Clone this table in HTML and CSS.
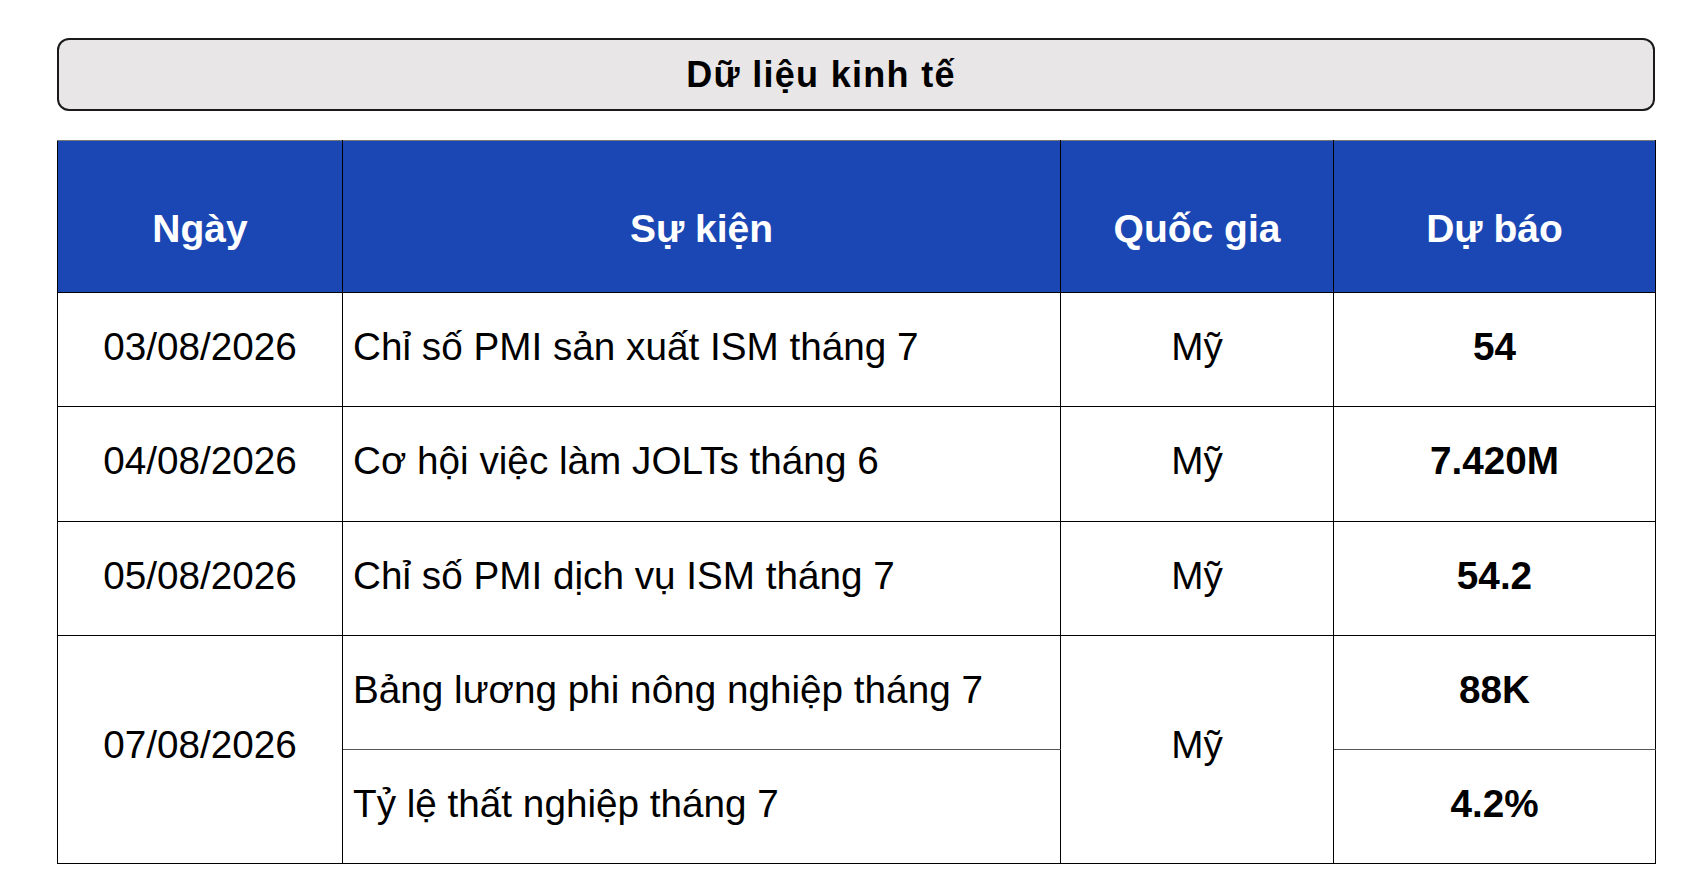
FILE: index.html
```html
<!DOCTYPE html>
<html lang="vi">
<head>
<meta charset="utf-8">
<title>Dữ liệu kinh tế</title>
<link rel="stylesheet" href="styles.css">
</head>
<body>
<div class="page">
  <div class="title-box"><span class="title">Dữ liệu kinh tế</span></div>
  <table class="data">
    <colgroup>
      <col class="c-date">
      <col class="c-event">
      <col class="c-country">
      <col class="c-forecast">
    </colgroup>
    <thead>
      <tr class="head-row">
        <th>Ngày</th>
        <th>Sự kiện</th>
        <th>Quốc gia</th>
        <th>Dự báo</th>
      </tr>
    </thead>
    <tbody>
      <tr class="r1">
        <td class="date">03/08/2026</td>
        <td class="event">Chỉ số PMI sản xuất ISM tháng 7</td>
        <td class="country">Mỹ</td>
        <td class="value">54</td>
      </tr>
      <tr class="r2">
        <td class="date">04/08/2026</td>
        <td class="event">Cơ hội việc làm JOLTs tháng 6</td>
        <td class="country">Mỹ</td>
        <td class="value">7.420M</td>
      </tr>
      <tr class="r3">
        <td class="date">05/08/2026</td>
        <td class="event">Chỉ số PMI dịch vụ ISM tháng 7</td>
        <td class="country">Mỹ</td>
        <td class="value">54.2</td>
      </tr>
      <tr class="r4">
        <td class="date merged" rowspan="2">07/08/2026</td>
        <td class="event sub-top">Bảng lương phi nông nghiệp tháng 7</td>
        <td class="country merged" rowspan="2">Mỹ</td>
        <td class="value sub-top">88K</td>
      </tr>
      <tr class="r5">
        <td class="event">Tỷ lệ thất nghiệp tháng 7</td>
        <td class="value">4.2%</td>
      </tr>
    </tbody>
  </table>
</div>
</body>
</html>
```
FILE: styles.css
```css
html, body {
  margin: 0;
  padding: 0;
  background: #ffffff;
}

body {
  font-family: "Liberation Sans", Arial, Helvetica, sans-serif;
  color: #000000;
}

.page {
  padding: 38px 51px 0 57px;
}

.title-box {
  box-sizing: border-box;
  height: 73px;
  background: #e8e6e7;
  border: 2px solid #1a1a1a;
  border-radius: 12px;
  display: flex;
  align-items: center;
  justify-content: center;
  padding-right: 70px;
}

.title {
  font-size: 36px;
  font-weight: bold;
  letter-spacing: 1.3px;
}

.data {
  margin-top: 29px;
  width: 1598px;
  border-collapse: collapse;
  table-layout: fixed;
}

.c-date { width: 285px; }
.c-event { width: 718px; }
.c-country { width: 273px; }
.c-forecast { width: 322px; }

.data th,
.data td {
  border: 1px solid #000000;
  padding: 0;
  vertical-align: middle;
}

.head-row {
  height: 152px;
}

.data th {
  background: #1b47b4;
  color: #ffffff;
  font-size: 39px;
  font-weight: bold;
  text-align: center;
  padding-top: 24px;
  border-top-color: #777777;
}

.data td {
  font-size: 38.7px;
  height: 107px;
  padding-bottom: 6px;
}

.data .r2 td { height: 108px; }

.data .date,
.data .country {
  text-align: center;
}

.data .merged {
  padding-bottom: 10px;
}

.data .event {
  text-align: left;
  padding-left: 10px;
}

.data .value {
  text-align: center;
  font-weight: bold;
}

.data .sub-top {
  border-bottom-color: #555555;
}
```
